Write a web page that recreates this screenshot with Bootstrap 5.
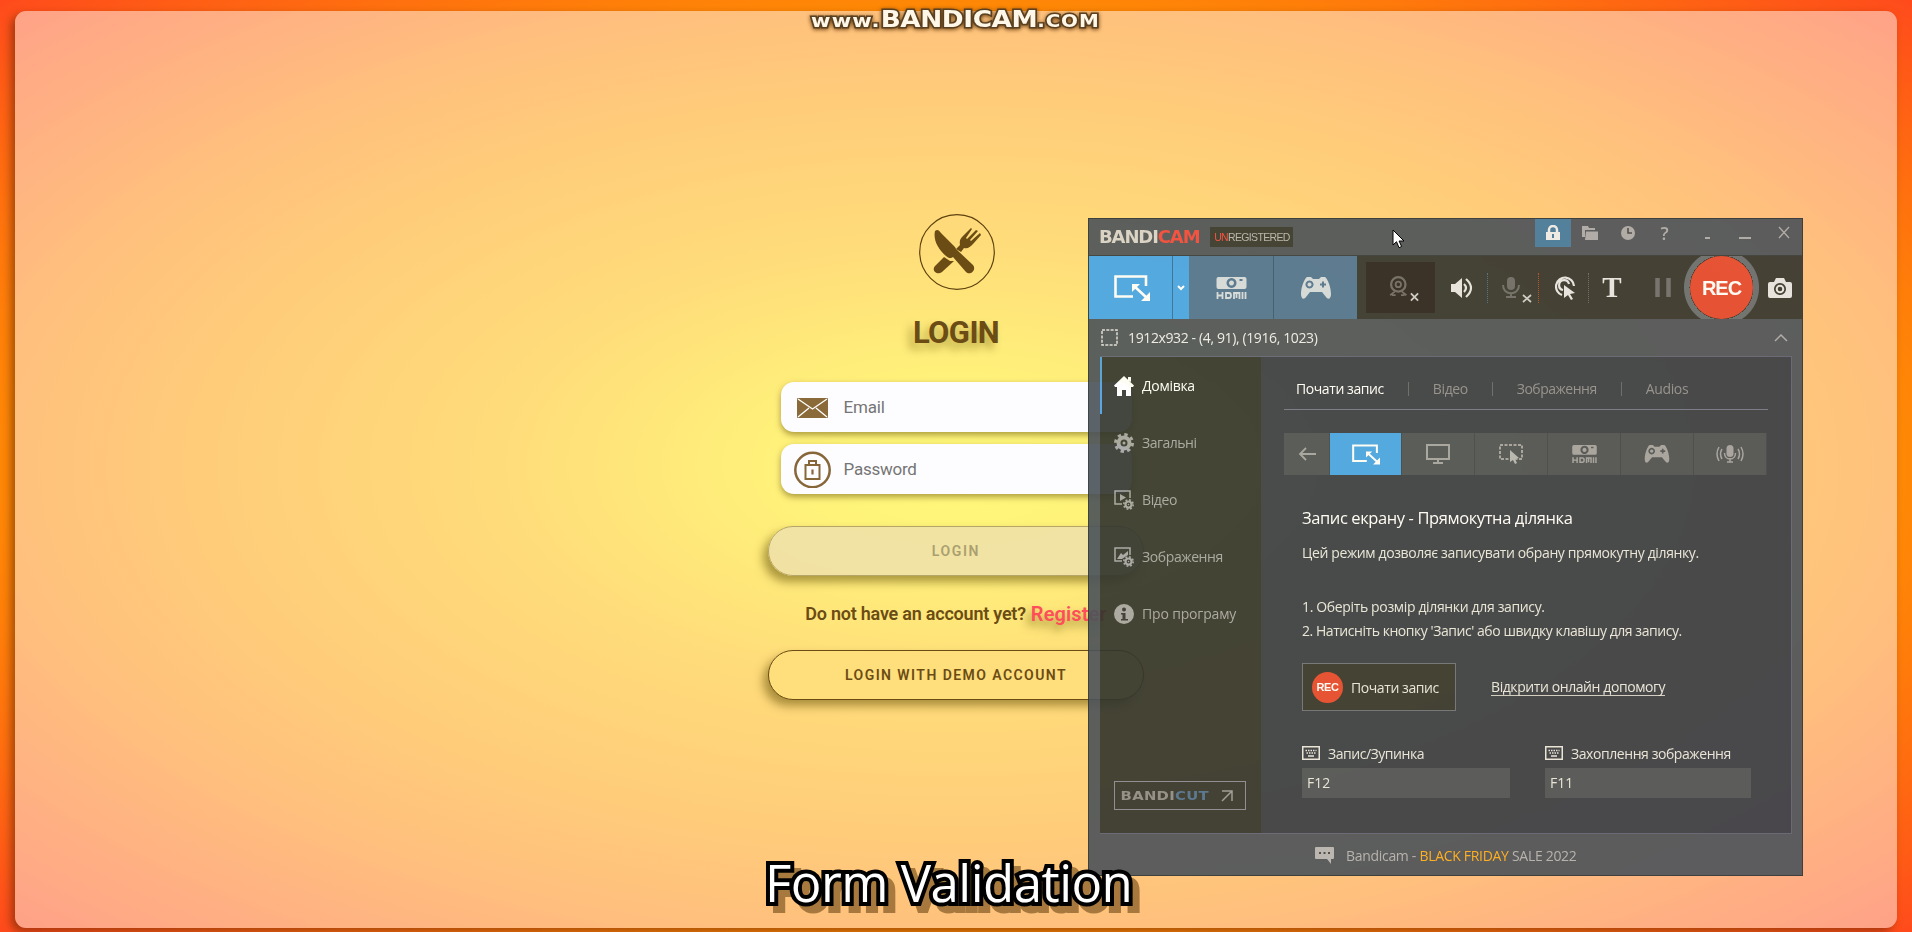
<!DOCTYPE html>
<html lang="uk">
<head>
<meta charset="utf-8">
<title>Login</title>
<link href="https://cdn.jsdelivr.net/npm/bootstrap@5.3.0/dist/css/bootstrap.min.css" rel="stylesheet">
<style>
body{height:932px;overflow:hidden;font-family:Roboto,sans-serif;color:#6b4c14;background:radial-gradient(ellipse farthest-corner at 50% 50%,#fff200 0%,#ffe800 12%,#ffbc00 34%,#ffa000 55%,#ff8806 70%,#ff4a1c 100%)}
[data-w]{display:inline-block;white-space:nowrap}
.stage{padding:11px 15px 4px;height:932px}
.pane{border-radius:11px;background:rgba(255,255,255,.48);box-shadow:-4px 4px 9px rgba(80,30,0,.5);height:917px}
.login-col{width:374px;padding-top:203px}
.logo{width:76px;height:76px;margin-left:1px}
.title{font-size:31px;line-height:37px;font-weight:700;text-shadow:-5px 6px 9px rgba(90,80,0,.45);margin:24px 0 0}
.field{width:351px;height:50px;border-radius:13px;background:#fdfdff;color:#757575;box-shadow:0 3px 6px rgba(90,70,0,.5);padding-left:13px;font-size:17px}
.field svg{margin-right:13px}
.field span{padding-top:1px}
.pill{width:376px;height:50px;border-radius:25px;border:1px solid #6b4c14;font-size:14px;font-weight:600;box-shadow:-5px 6px 10px rgba(90,70,0,.5)}
.pill.off{background:rgba(239,225,170,.85);border-color:#b5a668;color:#aaa070}
.pill.demo{background:#ffde7c}
.ask{font-size:18px;font-weight:600;line-height:24px;margin:26px 0 24px;gap:5px}
.ask a{color:#ff4d5a;font-size:20px;text-decoration:none;text-shadow:-4px 6px 8px rgba(90,80,0,.5)}
.wm{left:811px;top:5px;color:#fff8e8;font-family:"DejaVu Sans",sans-serif;font-weight:700;line-height:28px;-webkit-text-stroke:3px #5a4020;paint-order:stroke fill;filter:drop-shadow(0 1px 2px #6b4010);transform:scaleX(1.17);transform-origin:0 0}
.caption{left:765px;top:848px;font:400 51px/68px "Open Sans",sans-serif;color:#fff;-webkit-text-stroke:8px #000;paint-order:stroke fill;filter:drop-shadow(7px 7px 0 rgba(80,45,0,.5))}
.win{left:1088px;top:218px;width:715px;height:658px;opacity:.91;background:#4c535a;border:1px solid #2c3438;font-family:"Open Sans",sans-serif;font-size:14px;color:#ededed}
.tbar{height:36px;padding-left:10px}
.brand{font:700 18px/18px "DejaVu Sans",sans-serif;color:#d8d4cc}
.tag{background:#34372f;width:83px;height:20px;margin-left:11px;font:400 10.500px "Liberation Sans",sans-serif;color:#b5b5b0}
.red{color:#f0483c}
.tools{height:64px;background:#33352f;color:#e6e6e6;border-top:1px solid #343a3c}
.tools>div,.tb>div{display:flex;align-items:center;justify-content:center;height:100%;flex:none}
.blue,.modes>div.blue{background:#44a4e8;color:#fff}
.steel{background:#4f7392;color:#d4dce2}
.bar{border-left:1px dotted}
.cam-box{width:69px;height:51px;background:#282320;color:#777}
.rec{border-radius:50%;background:#e4482e;color:#fff;font-family:"Liberation Sans",sans-serif;font-weight:700;display:flex;align-items:center;justify-content:center;flex:none}
.ring{width:75px;height:63px;background:radial-gradient(circle,transparent 0 32px,#666d70 32px 37px,transparent 38px);margin:0 -10px}
.info{height:37px;padding:0 14px 0 12px}
.main{height:478px;margin:0 10px 0 11px;border:solid #5e6276;border-width:1px 1px 1px 0;background:#383d46}
.side{width:161px;background:#32352e;color:#a5a5a5}
.side>a{height:57px;padding-left:14px;gap:8px;color:inherit;text-decoration:none}
.side>a.on{color:#fff;border-left:2px solid #4b9ee0;padding-left:12px}
.cut{width:132px;height:29px;border:1px solid #888894;margin:0 0 23px 14px;font:700 13px/14px "DejaVu Sans",sans-serif;color:#8c8c8c}
.wide{transform:scaleX(1.14);transform-origin:50% 50%}
.cont{padding:0 23px 0 23px}
.tabs{height:53px;border-bottom:1px solid #71758a;color:#8f8f8f;padding:11px 0 0 12px}
.tabs i{width:1px;height:14px;background:#62666c;margin:0 24px}
.modes{height:42px;margin-top:23px;color:#a2a2a2}
.modes>div{display:flex;align-items:center;justify-content:center;background:#4b5155;border-right:1px solid #3e444a;width:73px;flex:none}
.txt{padding-left:18px;color:#e8e8e0}
.start{width:154px;height:48px;border:1px solid #6c7078;background:#32352e;gap:8px;padding-left:9px}
.key{height:30px;background:#4c5357;padding:0 5px;line-height:30px;font-size:14px}
.foot{height:41px;color:#b2b2b2}
.ptr{left:1392px;top:229px}
.help{color:inherit;text-decoration:none;border-bottom:1px solid #cfcfc8;line-height:17px}
</style>
</head>
<body>
<svg class="d-none">
 <symbol id="rect" viewBox="0 0 36 26"><path d="M32 11V1.500H1.500V21.500H19" fill="none" stroke="currentColor" stroke-width="2.600"/><path d="M20 11l13 12" stroke="currentColor" stroke-width="2.600"/><path d="M18 9l8 0-8 8zM36 26h-9l9-9z" fill="currentColor"/></symbol>
 <symbol id="pad" viewBox="0 0 30 22"><path fill="currentColor" fill-rule="evenodd" d="M6 0h4l2 2h6l2-2h4c3 2 6 11 6 17 0 5-3 6-5 3l-4-5H9l-4 5c-2 3-5 2-5-3C0 11 3 2 6 0zM8.500 3.500a4 4 0 1 0 .01 0zm0 2a2 2 0 1 1-.01 0zM21 4.500v2h-2V8.500h2v2h2v-2h2v-2h-2v-2z"/></symbol>
 <symbol id="hdmi" viewBox="0 0 30 22"><path fill="currentColor" fill-rule="evenodd" d="M2 0h26q2 0 2 2v8q0 2-2 2H2q-2 0-2-2V2q0-2 2-2zM15 1a5 5 0 1 0 .01 0zm0 2.500a2.500 2.500 0 1 1-.01 0zM23 2v2h3V2z"/><path d="M1 15v7M6 15v7M1 18.500h5M9.500 16v5h3q2 0 2-2.500T12.500 16zM17.500 22v-6h2.500v5-5h3v6M26 15v7M29 15v7" stroke="currentColor" stroke-width="1.800" fill="none"/></symbol>
 <symbol id="gear" viewBox="0 0 20 20"><circle cx="10" cy="10" r="5.500" fill="none" stroke="currentColor" stroke-width="4"/><circle cx="10" cy="10" r="8.500" fill="none" stroke="currentColor" stroke-width="3" stroke-dasharray="3.340 3.340"/><circle cx="10" cy="10" r="1.500" fill="currentColor"/></symbol>
 <symbol id="kbd" viewBox="0 0 18 14"><rect x=".75" y=".75" width="16.500" height="12.500" fill="none" stroke="currentColor" stroke-width="1.500"/><path d="M3.500 4.500h11M4.500 7h9" stroke="currentColor" stroke-width="1.500" stroke-dasharray="1.500 1"/><path d="M6 10h6" stroke="currentColor" stroke-width="1.500"/></symbol>
</svg>

<div class="stage">
 <div class="pane d-flex justify-content-center">
  <div class="login-col d-flex flex-column align-items-center">
   <svg class="logo" viewBox="0 0 76 76"><circle cx="38" cy="38" r="37.300" fill="none" stroke="#5d4210" stroke-width="1.200"/>
    <g fill="#6b4c14"><path d="M16 17c2-2 4-1 6 2l14 14 1 2 17 16c4 5-3 11-7 7L34 43c-2 2-5 1-7-1-8-7-13-16-11-25z"/><path d="M37 35l4-4c-1-5 1-7 3-9l8-8 1 1-6 9 1 1 9-9 2 1-8 9 1 1 9-8 1 2-8 9c-3 3-5 5-9 4l-3 4zM25 43l6 4h4L23 58c-5 4-11-2-7-6z"/></g></svg>
   <h1 class="title"><span data-w="86">LOGIN</span></h1>
   <div class="field d-flex align-items-center" style="margin-top:31px"><svg width="37" height="37" viewBox="0 0 37 37"><rect x="3" y="9" width="31" height="20" rx="1" fill="#8a6a38"/><path d="M4 10l14.500 10L33 10M4 28l11-9M33 28l-11-9" fill="none" stroke="#fff" stroke-width="1.300"/></svg><span data-w="41">Email</span></div>
   <div class="field d-flex align-items-center" style="margin-top:12px"><svg width="37" height="37" viewBox="0 0 37 37" fill="none" stroke="#87663a"><circle cx="18.500" cy="19" r="17.200" stroke-width="2.500"/><rect x="11.500" y="14" width="14" height="14" stroke-width="2"/><path d="M15 13.500v-3.500h7v3.500" stroke-width="2"/><path d="M18.500 18.500v5" stroke-width="2.200"/></svg><span data-w="73">Password</span></div>
   <div class="pill off d-flex align-items-center justify-content-center" style="margin-top:32px"><span data-w="48">LOGIN</span></div>
   <div class="ask d-flex align-items-center"><span data-w="221">Do not have an account yet?</span><a href="#"><span data-w="76">Register</span></a></div>
   <div class="pill demo d-flex align-items-center justify-content-center"><span data-w="222">LOGIN WITH DEMO ACCOUNT</span></div>
  </div>
 </div>
</div>

<div class="win position-absolute">
 <div class="tbar d-flex align-items-center">
  <span class="brand" data-w="100">BANDI<span class="red">CAM</span></span>
  <div class="tag d-flex align-items-center justify-content-center"><span data-w="75"><span class="red">UN</span>REGISTERED</span></div>
  <div class="tb d-flex ms-auto align-self-start" style="height:28px">
   <div style="width:36px;background:#43799f"><svg width="16" height="16" viewBox="0 0 16 16"><path d="M4 8V5a4 4 0 0 1 8 0v3" fill="none" stroke="#eee" stroke-width="2.500"/><path fill="#eee" fill-rule="evenodd" d="M1 7h14v8H1zM7 9v4h2V9z"/></svg></div>
   <div style="width:38px"><svg width="16" height="14" viewBox="0 0 16 14" fill="#aaa"><path d="M0 0h6l1 2h6v2H3v7H0z"/><path d="M4 5.500h12V14H3z"/></svg></div>
   <div style="width:37px"><svg width="16" height="16" viewBox="0 0 16 16"><circle cx="8" cy="8" r="7" fill="#aaa"/><path d="M8 3v5h4" stroke="#444" stroke-width="1.600" fill="none"/></svg></div>
   <div style="width:37px;color:#aaa;font-size:18px;font-weight:600">?</div>
   <div style="width:48px"><svg width="5" height="20"><path d="M0 15h5" stroke="#aaa" stroke-width="2"/></svg></div>
   <div style="width:27px"><svg width="12" height="20"><path d="M0 15h12" stroke="#aaa" stroke-width="2"/></svg></div>
   <div style="width:44px;padding-left:8px"><svg width="12" height="14"><path d="M1 1l10 11M11 1L1 12" stroke="#aaa" stroke-width="1.300"/></svg></div>
  </div>
 </div>
 <div class="tools d-flex">
  <div class="blue" style="width:83px;padding-left:3px"><svg width="36" height="26"><use href="#rect"/></svg></div>
  <div class="blue" style="width:17px;border-left:1px solid #2d6ea0"><svg width="8" height="6"><path d="M1 1l3 3 3-3" fill="none" stroke="#fff" stroke-width="2"/></svg></div>
  <div class="steel" style="width:84px"><svg width="31" height="22"><use href="#hdmi"/></svg></div>
  <div class="steel" style="width:84px;border-left:1px solid #34566e"><svg width="30" height="22"><use href="#pad"/></svg></div>
  <div style="width:87px"><div class="cam-box d-flex align-items-center justify-content-center"><svg width="36" height="32" viewBox="0 0 40 32" fill="none" stroke="#6c6a66"><circle cx="17" cy="12" r="8" stroke-width="2.500"/><circle cx="17" cy="12" r="3" stroke-width="2"/><path d="M8 24l5-4M26 24l-5-4M10 24h4M20 24h4" stroke-width="2"/><path d="M31 22l8 8M39 22l-8 8" stroke="#ccc" stroke-width="2"/></svg></div></div>
  <div style="width:36px"><svg width="24" height="22" viewBox="0 0 24 22"><path d="M1 7h4l7-6v20l-7-6H1z" fill="currentColor"/><path d="M14 7q4 4 0 8M16 2q10 9 0 18" fill="none" stroke="currentColor" stroke-width="2.200"/></svg></div>
  <div style="width:14px;color:#456d8a"><span class="bar" style="height:30px"></span></div>
  <div style="width:41px"><svg width="34" height="32" viewBox="0 0 34 32"><rect x="9" y="5" width="8" height="13" rx="4" fill="#6a6a6a"/><path d="M5 13c0 11 16 11 16 0M13 21v4M8 25h10" fill="none" stroke="#6a6a6a" stroke-width="2"/><path d="M25 23l8 7M33 23l-8 7" stroke="#ccc" stroke-width="1.800"/></svg></div>
  <div style="width:7px;color:#b04a24"><span class="bar" style="height:30px"></span></div>
  <div style="width:43px;padding-left:4px"><svg width="22" height="24" viewBox="0 0 22 24"><path d="M7 19A9 9 0 1 1 19 10M8 14a5 5 0 1 1 6-6" fill="none" stroke="currentColor" stroke-width="2.200"/><path d="M9 9l11 8-5 1 3 5-2 1-3-5-4 3z" fill="currentColor"/></svg></div>
  <div style="width:7px;color:#666"><span class="bar" style="height:30px"></span></div>
  <div style="width:40px;font:700 29px 'Liberation Serif',serif">T</div>
  <div style="width:62px"><svg width="16" height="19"><path d="M2.500 0v19M13.500 0v19" stroke="#6c6c6c" stroke-width="4.500"/></svg></div>
  <div class="ring"><div class="rec" style="width:63px;height:63px;font-size:20px"><span data-w="39">REC</span></div></div>
  <div style="width:43px;margin-left:9px"><svg width="24" height="20" viewBox="0 0 24 20"><path fill="currentColor" fill-rule="evenodd" d="M2 4h4l2-4h8l2 4h4q2 0 2 2v12q0 2-2 2H2q-2 0-2-2V6q0-2 2-2zM12 5a6 6 0 1 0 .01 0z"/><circle cx="12" cy="11" r="3.300" fill="none" stroke="currentColor" stroke-width="2"/></svg></div>
 </div>
 <div class="info d-flex align-items-center">
  <svg width="17" height="17"><rect x="1" y="1" width="15" height="15" fill="none" stroke="#ddd" stroke-width="1.500" stroke-dasharray="3 1.300"/></svg>
  <span style="margin-left:10px" data-w="190">1912x932 - (4, 91), (1916, 1023)</span>
  <svg class="ms-auto" width="14" height="8"><path d="M1 7l6-6 6 6" fill="none" stroke="#aaa" stroke-width="1.500"/></svg>
 </div>
 <div class="main d-flex">
  <div class="side d-flex flex-column flex-shrink-0">
   <a href="#" class="on d-flex align-items-center"><svg width="20" height="20" viewBox="0 0 20 20"><path d="M10 0l10 9.500-1 1.500h-2v9h-5v-6H8v6H3v-9H1L0 9.500zM14 1h3v5l-3-2z" fill="currentColor"/></svg><span data-w="53">Домівка</span></a>
   <a href="#" class="d-flex align-items-center"><svg width="20" height="20"><use href="#gear"/></svg><span data-w="54">Загальні</span></a>
   <a href="#" class="d-flex align-items-center"><svg width="20" height="20" viewBox="0 0 20 20"><path d="M8 14H1V1h15v7" fill="none" stroke="currentColor" stroke-width="1.500"/><path d="M6 4l6 3.500L6 11z" fill="currentColor"/><use href="#gear" x="9" y="9" width="11" height="11"/></svg><span data-w="35">Відео</span></a>
   <a href="#" class="d-flex align-items-center"><svg width="20" height="20" viewBox="0 0 20 20"><path d="M8 14H1V1h15v7" fill="none" stroke="currentColor" stroke-width="1.500"/><path d="M3 12l4-6 2 2 5-4v4l-6 4z" fill="currentColor"/><use href="#gear" x="9" y="9" width="11" height="11"/></svg><span data-w="81">Зображення</span></a>
   <a href="#" class="d-flex align-items-center"><svg width="20" height="20" viewBox="0 0 20 20"><circle cx="10" cy="10" r="10" fill="currentColor"/><circle cx="10" cy="5.500" r="2" fill="#333"/><path d="M7 9h4.500v6H14v1.500H7V15h1.500v-4.500H7z" fill="#333"/></svg><span data-w="94">Про програму</span></a>
   <div class="cut mt-auto d-flex align-items-center justify-content-center"><span class="wide" data-w="77">BANDI<span style="color:#4c7193">CUT</span></span><svg style="margin-left:16px" width="14" height="12"><path d="M2 11L12 1M2 1h10v10" fill="none" stroke="#999" stroke-width="1.500"/></svg></div>
  </div>
  <div class="cont flex-grow-1">
   <div class="tabs d-flex align-items-center"><span class="text-white" data-w="88">Почати запис</span><i></i><span data-w="35">Відео</span><i></i><span data-w="80">Зображення</span><i></i><span data-w="43">Audios</span></div>
   <div class="modes d-flex">
    <div style="width:46px"><svg width="18" height="14"><path d="M8 1L2 7l6 6M2 7h16" fill="none" stroke="currentColor" stroke-width="1.800"/></svg></div>
    <div class="blue" style="width:72px"><svg width="28" height="21"><use href="#rect"/></svg></div>
    <div><svg width="24" height="20"><path d="M1 1h22v14H1zM12 15v4M7 19h10" fill="none" stroke="currentColor" stroke-width="2"/></svg></div>
    <div><svg width="25" height="20"><rect x="1" y="1" width="22" height="14" fill="none" stroke="currentColor" stroke-width="2" stroke-dasharray="3 1.500"/><path d="M11 6l9 8-4 1 2 4-2 1-2-4-3 2z" fill="#b5b5b5"/></svg></div>
    <div><svg width="25" height="18"><use href="#hdmi"/></svg></div>
    <div><svg width="26" height="18"><use href="#pad"/></svg></div>
    <div><svg width="28" height="18" viewBox="0 0 28 18"><rect x="10.500" y="0" width="7" height="12" rx="3.500" fill="currentColor"/><path d="M8.500 8c0 8 11 8 11 0M14 13v4M11 17h6M6 4q-3 5 0 10M22 4q3 5 0 10M3 2q-4 7 0 14M25 2q4 7 0 14" fill="none" stroke="currentColor" stroke-width="1.500"/></svg></div>
   </div>
   <div class="txt">
    <div class="text-white" style="margin-top:31px;font-size:16.500px;line-height:24px"><span data-w="270">Запис екрану - Прямокутна ділянка</span></div>
    <div style="margin-top:11px;line-height:24px"><span data-w="397">Цей режим дозволяє записувати обрану прямокутну ділянку.</span></div>
    <div style="margin-top:30px;line-height:24px"><span data-w="243">1. Оберіть розмір ділянки для запису.</span><br><span data-w="380">2. Натисніть кнопку 'Запис' або швидку клавішу для запису.</span></div>
    <div class="d-flex align-items-center" style="margin-top:20px">
     <div class="start d-flex align-items-center"><div class="rec" style="width:31px;height:31px;font-size:11px"><span data-w="22">REC</span></div><span data-w="88">Почати запис</span></div>
     <a href="#" class="help" style="margin-left:35px"><span data-w="174">Відкрити онлайн допомогу</span></a>
    </div>
    <div class="d-flex" style="margin-top:30px;gap:35px">
     <div style="width:208px"><div class="d-flex align-items-center" style="gap:8px;height:24px"><svg width="18" height="14"><use href="#kbd"/></svg><span data-w="96">Запис/Зупинка</span></div><div class="key" style="margin-top:3px">F12</div></div>
     <div style="width:206px"><div class="d-flex align-items-center" style="gap:8px;height:24px"><svg width="18" height="14"><use href="#kbd"/></svg><span data-w="160">Захоплення зображення</span></div><div class="key" style="margin-top:3px">F11</div></div>
    </div>
   </div>
  </div>
 </div>
 <div class="foot d-flex align-items-center" style="padding-left:226px;padding-top:1px"><svg width="19" height="17" viewBox="0 0 19 17"><path d="M1 0h17q1 0 1 1v10q0 1-1 1h-2v5l-4-5H1q-1 0-1-1V1q0-1 1-1z" fill="#b5b5b5"/><path d="M4 6h11" stroke="#444" stroke-width="2" stroke-dasharray="2 2.500"/></svg><span style="margin-left:12px" data-w="231">Bandicam - <span style="color:#ffae1a">BLACK FRIDAY</span> SALE 2022</span></div>
</div>

<svg class="ptr position-absolute" width="13" height="21" viewBox="0 0 13 21"><path d="M1 1v15l3.500-3.300 2.500 6 2.600-1.200-2.500-5.500H12z" fill="#fff" stroke="#000"/></svg>
<div class="wm position-absolute d-flex align-items-baseline"><span data-w="60" style="font-size:18px">www.</span><span data-w="134" style="font-size:22.500px">BANDICAM</span><span data-w="53" style="font-size:17px">.COM</span></div>
<div class="caption position-absolute"><span data-w="367">Form Validation</span></div>

<script src="https://cdn.jsdelivr.net/npm/bootstrap@5.3.0/dist/js/bootstrap.bundle.min.js"></script>
<script>
// track each label out to its measured width
document.querySelectorAll('[data-w]').forEach(function (el) {
  var gap = (parseFloat(el.dataset.w) - el.offsetWidth) / el.textContent.length;
  el.style.letterSpacing = gap.toFixed(3) + 'px';
});
</script>
</body>
</html>
